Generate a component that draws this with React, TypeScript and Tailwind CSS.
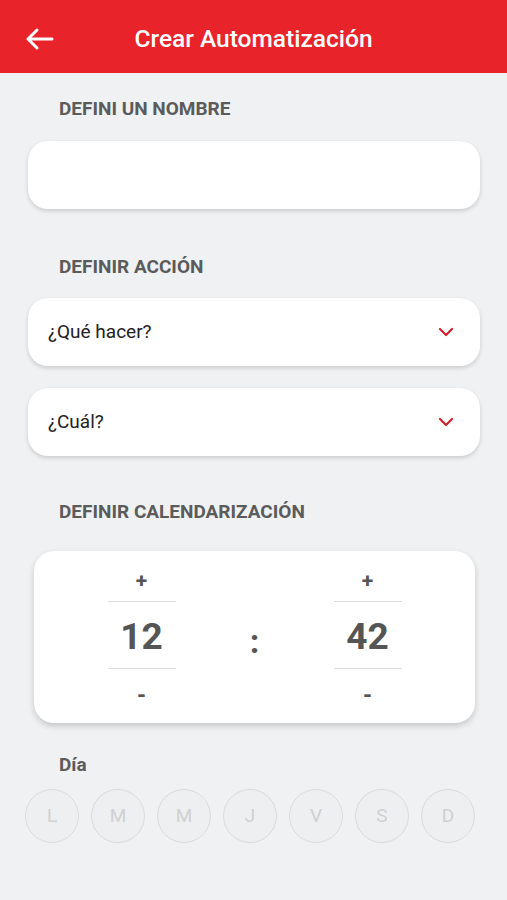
import { ChevronDown } from "lucide-react";

const days = ["L", "M", "M", "J", "V", "S", "D"];

function SectionLabel({ children }: { children: React.ReactNode }) {
  return (
    <div className="pl-[59px] h-[20px] leading-[20px] text-[19px] font-bold text-[#5b5b5b]">
      {children}
    </div>
  );
}

function Select({ label }: { label: string }) {
  return (
    <div className="ml-[28px] mr-[27px] h-[68px] rounded-[20px] bg-white shadow-[0_2px_4px_rgba(0,0,0,0.16)] flex items-center justify-between pl-[20px] pr-[22px]">
      <span className="text-[19px] text-[#222]">{label}</span>
      <ChevronDown className="h-[24px] w-[24px] text-[#d3202a]" strokeWidth={2.2} />
    </div>
  );
}

function Spinner({ value }: { value: string }) {
  return (
    <div className="w-[68px] flex flex-col items-center text-[#555]">
      <div className="h-[28px] leading-[28px] text-[21px] font-bold">+</div>
      <div className="mt-[6px] w-full border-t border-[#ddd]" />
      <div className="h-[66px] w-full flex items-center justify-center text-[37px] font-bold pt-[4px]">
        {value}
      </div>
      <div className="w-full border-t border-[#ddd]" />
      <div className="mt-[13px] h-[28px] leading-[28px] text-[23px] font-bold">-</div>
    </div>
  );
}

export default function App() {
  return (
    <div className="min-h-[900px] bg-[#f0f1f3] font-['Roboto',sans-serif]">
      <div className="h-[73px] bg-[#e8232a] flex items-center relative pt-[6px]">
        <svg
          className="absolute left-[25px] top-[27px]"
          width="29"
          height="24"
          viewBox="0 0 29 24"
          fill="none"
          stroke="white"
          strokeWidth="3"
          strokeLinecap="round"
          strokeLinejoin="round"
        >
          <path d="M27 12H3M12 3L3 12l9 9" />
        </svg>
        <div className="flex-1 text-center text-white text-[24.5px] font-medium">
          Crear Automatización
        </div>
      </div>

      <div className="pt-[26px]">
        <SectionLabel>DEFINI UN NOMBRE</SectionLabel>
        <div className="mt-[22px] ml-[28px] mr-[27px] h-[68px] rounded-[20px] bg-white shadow-[0_2px_4px_rgba(0,0,0,0.16)]" />

        <div className="mt-[48px]">
          <SectionLabel>DEFINIR ACCIÓN</SectionLabel>
        </div>
        <div className="mt-[21px]">
          <Select label="¿Qué hacer?" />
        </div>
        <div className="mt-[22px]">
          <Select label="¿Cuál?" />
        </div>

        <div className="mt-[46px]">
          <SectionLabel>DEFINIR CALENDARIZACIÓN</SectionLabel>
        </div>
        <div className="mt-[29px] ml-[34px] mr-[32px] rounded-[20px] bg-white shadow-[0_3px_6px_rgba(0,0,0,0.18)] pt-[16px] pb-[13px] flex justify-center">
          <Spinner value="12" />
          <div className="w-[158px] flex items-center justify-center pt-[6px] text-[34px] font-bold text-[#555]">
            :
          </div>
          <Spinner value="42" />
        </div>

        <div className="mt-[32px] pl-[59px] h-[20px] leading-[20px] text-[19px] font-bold text-[#5b5b5b]">
          Día
        </div>
        <div className="mt-[14px] pl-[25px] flex gap-[12px]">
          {days.map((d, i) => (
            <div
              key={i}
              className="h-[54px] w-[54px] rounded-full border-[1.5px] border-[#dadada] bg-[#eeeff1] flex items-center justify-center text-[19px] text-[#d0d0d0]"
            >
              {d}
            </div>
          ))}
        </div>
      </div>
    </div>
  );
}
